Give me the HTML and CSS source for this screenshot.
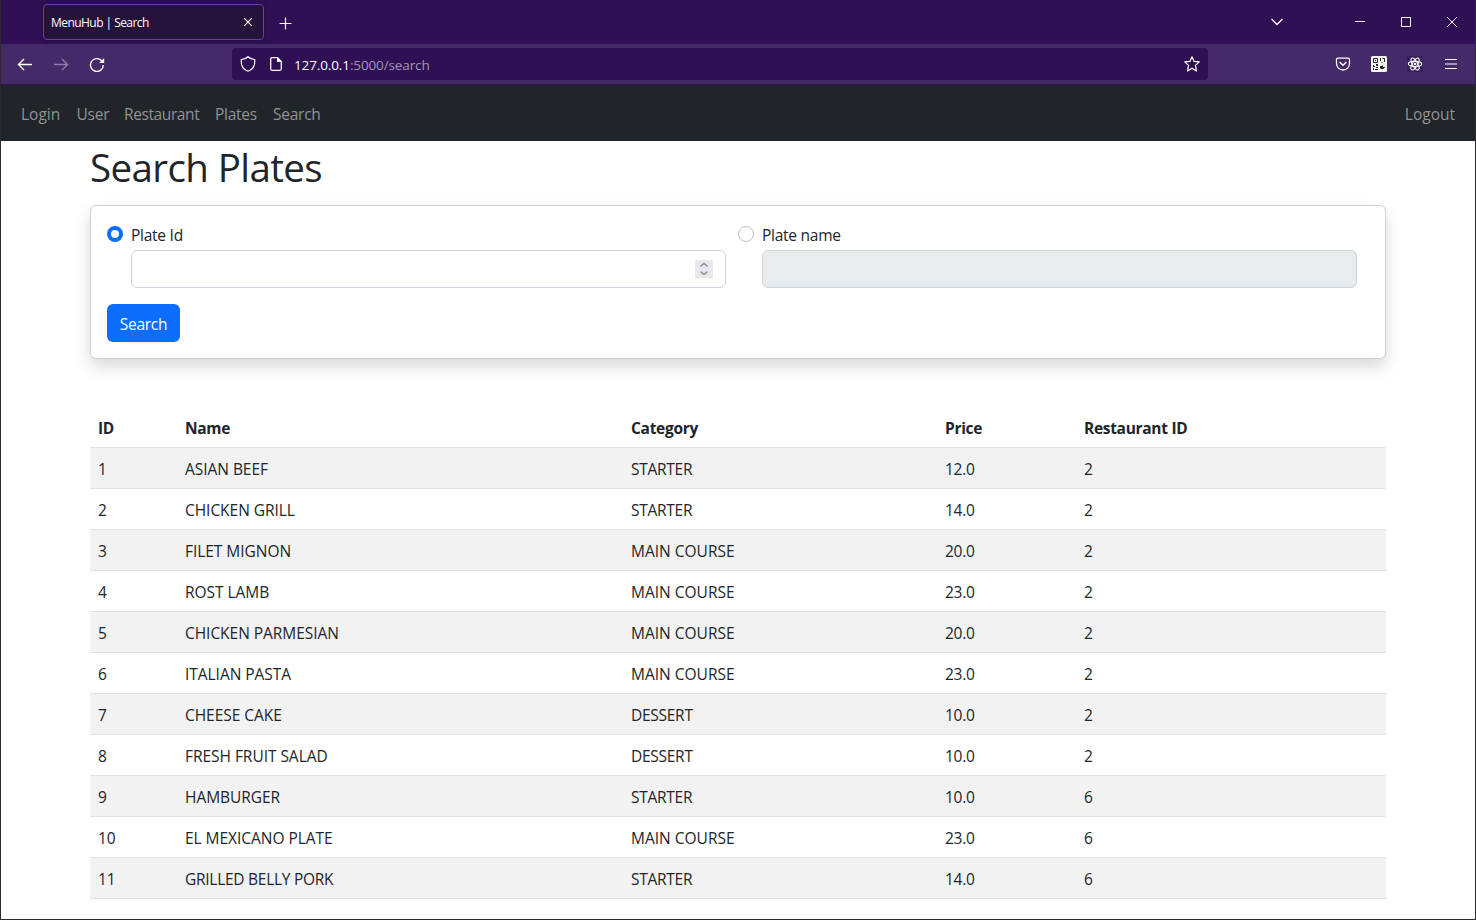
FILE: index.html
```html
<!DOCTYPE html>
<html lang="en">
<head>
<meta charset="utf-8">
<title>MenuHub | Search</title>
<link rel="stylesheet" href="styles.css">
</head>
<body>
<div class="window">
  <header class="tabbar">
    <div class="tab"><span class="tab-title">MenuHub | Search</span>
      <svg class="tab-close" width="10" height="10" viewBox="0 0 10 10"><path d="M1.200 1.200l7.600 7.600M8.800 1.200L1.200 8.800"/></svg>
    </div>
    <svg class="new-tab" width="13" height="13" viewBox="0 0 13 13"><path d="M6.500 .5v12M.5 6.500h12"/></svg>
    <div class="controls">
      <svg width="14" height="10" viewBox="0 0 14 10"><path d="M1.500 2L7 7.500 12.500 2" stroke-width="1.300"/></svg>
      <svg class="minimize" width="12" height="12" viewBox="0 0 12 12"><path d="M1 5.500h10"/></svg>
      <svg width="12" height="12" viewBox="0 0 12 12"><path d="M1.500 1.500h9v9h-9z"/></svg>
      <svg width="12" height="12" viewBox="0 0 12 12"><path d="M1 1l10 10M11 1L1 11"/></svg>
    </div>
  </header>
  <div class="toolbar">
    <div class="history">
      <svg width="16" height="16" viewBox="0 0 16 16"><path d="M15 8.500H2M7 3L1.500 8.500 7 14"/></svg>
      <svg class="disabled" width="16" height="16" viewBox="0 0 16 16"><path d="M1 8.500h13M9 3l5.500 5.500L9 14"/></svg>
      <svg width="16" height="16" viewBox="0 0 16 16"><path d="M14.300 9A6.400 6.400 0 1 1 12.600 4.700L14 5.800"/><path class="solid" d="M15.200 2v5H10.200z"/></svg>
    </div>
    <div class="address">
      <svg width="16" height="16" viewBox="0 0 16 16"><path d="M8 .8C6.200 2.500 4 3.300 1.300 3.500v2.700c0 4.200 2.200 7.400 6.700 9.100 4.500-1.700 6.700-4.900 6.700-9.100V3.500C12 3.300 9.800 2.500 8 .8z" stroke-width="1.200"/></svg>
      <svg class="page-icon" width="16" height="16" viewBox="0 0 16 16"><path d="M9.500 1.700H4.200q-1.500 0-1.500 1.500v9.600q0 1.500 1.500 1.500h7.600q1.500 0 1.500-1.500V5.500z" stroke-width="1.300"/><path class="solid" d="M9 1l5 5H9z"/></svg>
      <span class="url"><b>127.0.0.1</b>:5000/search</span>
      <svg class="star" width="18" height="18" viewBox="0 0 18 18"><path d="M9 1.800l2.100 4.600 5.200.5-3.900 3.500 1.100 5.500L9 13.200l-4.500 2.700 1.100-5.500-3.900-3.500 5.200-.5z" stroke-width="1.200" stroke-linejoin="round"/></svg>
    </div>
    <div class="extensions">
      <svg width="16" height="16" viewBox="0 0 16 16"><path d="M3 2.200h10q1.500 0 1.500 1.500v3.800a6.500 6.500 0 0 1-13 0V3.700q0-1.500 1.500-1.500z" stroke-width="1.300"/><path d="M4.600 6L8 9.300 11.400 6" stroke-width="1.500"/></svg>
      <svg width="16" height="16" viewBox="0 0 16 16"><rect class="qr-base" width="16" height="16" rx="1.500"/><path class="qr-line" d="M2.500 2.500h4v4h-4zM9.500 2v3M13.500 2.500V6M10.500 6.500h1M11.500 2.500h2"/><path class="qr-dot" d="M4 4h1v1H4zM2 9h1v1h1v1H2zM5 8h2v2H5zM2 12h1v2H2zM4 13h3v1H4zM5 11h2v1H5zM9 10h2l1-1v2h2a2.800 2.800 0 0 1-5 1z"/></svg>
      <svg width="16" height="16" viewBox="0 0 16 16"><rect class="react-base" width="16" height="16"/><g stroke-width="1.100"><ellipse cx="8" cy="8" rx="6.700" ry="2.600"/><ellipse cx="8" cy="8" rx="6.700" ry="2.600" transform="rotate(60 8 8)"/><ellipse cx="8" cy="8" rx="6.700" ry="2.600" transform="rotate(120 8 8)"/></g><circle class="solid" cx="8" cy="8" r="1.300"/></svg>
      <svg width="16" height="16" viewBox="0 0 16 16"><path d="M2 3.500h12M2 8h12M2 12.500h12"/></svg>
    </div>
  </div>
  <nav class="navbar">
    <a class="w-login">Login</a><a class="w-user">User</a><a class="w-restaurant">Restaurant</a><a class="w-plates">Plates</a><a class="w-search">Search</a>
    <a class="logout">Logout</a>
  </nav>
  <main class="container">
    <h1>Search Plates</h1>
    <form class="card">
      <div class="fields">
        <div class="field">
          <span class="radio checked"></span>
          <label>Plate Id</label>
          <div class="input"><span class="spinner"><svg width="18" height="18" viewBox="0 0 18 18"><path d="M5.500 6.500L9 3.500l3.500 3M5.500 11.500l3.500 3 3.500-3"/></svg></span></div>
        </div>
        <div class="field">
          <span class="radio"></span>
          <label>Plate name</label>
          <div class="input off"></div>
        </div>
      </div>
      <button type="button" class="btn">Search</button>
    </form>
    <table class="plates">
      <colgroup><col class="c-id"><col class="c-name"><col class="c-category"><col class="c-price"><col></colgroup>
      <thead><tr><th>ID</th><th>Name</th><th>Category</th><th>Price</th><th>Restaurant ID</th></tr></thead>
      <tbody>
        <tr><td>1</td><td>ASIAN BEEF</td><td class="tight">STARTER</td><td>12.0</td><td>2</td></tr>
        <tr><td>2</td><td>CHICKEN GRILL</td><td class="tight">STARTER</td><td>14.0</td><td>2</td></tr>
        <tr><td>3</td><td>FILET MIGNON</td><td>MAIN COURSE</td><td>20.0</td><td>2</td></tr>
        <tr><td>4</td><td>ROST LAMB</td><td>MAIN COURSE</td><td>23.0</td><td>2</td></tr>
        <tr><td>5</td><td>CHICKEN PARMESIAN</td><td>MAIN COURSE</td><td>20.0</td><td>2</td></tr>
        <tr><td>6</td><td>ITALIAN PASTA</td><td>MAIN COURSE</td><td>23.0</td><td>2</td></tr>
        <tr><td>7</td><td>CHEESE CAKE</td><td class="tight">DESSERT</td><td>10.0</td><td>2</td></tr>
        <tr><td>8</td><td>FRESH FRUIT SALAD</td><td class="tight">DESSERT</td><td>10.0</td><td>2</td></tr>
        <tr><td>9</td><td>HAMBURGER</td><td class="tight">STARTER</td><td>10.0</td><td>6</td></tr>
        <tr><td>10</td><td>EL MEXICANO PLATE</td><td>MAIN COURSE</td><td>23.0</td><td>6</td></tr>
        <tr><td>11</td><td class="tight">GRILLED BELLY PORK</td><td class="tight">STARTER</td><td>14.0</td><td>6</td></tr>
      </tbody>
    </table>
  </main>
</div>
</body>
</html>
```
FILE: styles.css
```css
* { box-sizing: border-box; }
body { margin: 0; font-family: "Open Sans", "Noto Sans", sans-serif; font-size: 15.5px; line-height: 24px; color: #212529; background: #fff; }
.window { height: 920px; border: 1px solid #2b2b2b; border-top: 0; overflow: hidden; }
svg { display: block; flex: none; fill: none; stroke: #fbfbfe; stroke-width: 1.2; }
.solid { fill: #fbfbfe; stroke: none; }

.tabbar { height: 44px; display: flex; align-items: center; padding-left: 42px; background: #2f1054; }
.tab { width: 221px; height: 36px; display: flex; align-items: center; justify-content: space-between; padding: 0 10px 0 7px; border: 1px solid #6a3fab; border-radius: 4px; background: #26133a; color: #fbfbfe; font-size: 12px; box-shadow: 0 0 4px rgba(0,0,0,.35); }
.tab-title { padding-top: 2px; letter-spacing: -.55px; white-space: nowrap; }
.new-tab { margin: 2px 0 0 15px; }
.controls { display: flex; align-items: center; gap: 34px; margin-left: auto; padding-right: 17px; }
.controls svg { stroke-width: 1; }
.minimize { margin-left: 36px; }

.toolbar { height: 41px; display: flex; align-items: center; background: #452a69; border-bottom: 1px solid #2f1054; }
.history { width: 231px; display: flex; gap: 20px; padding-left: 16px; }
.history svg { stroke-width: 1.4; }
.disabled { opacity: .4; }
.address { width: 976px; height: 32px; display: flex; align-items: center; padding: 0 7px 0 8px; border-radius: 4px; background: #2f1054; }
.page-icon { margin-left: 12px; }
.url { margin-left: 10px; padding-top: 2px; font-size: 13.5px; letter-spacing: -.12px; color: #a394b8; }
.url b { font-weight: 400; color: #fbfbfe; }
.star { margin-left: auto; }
.extensions { display: flex; gap: 20px; margin-left: auto; padding-right: 16px; }
.qr-base { fill: #f4f4f4; stroke: none; }
.qr-line { stroke: #222; stroke-width: 1; }
.qr-dot { fill: #222; stroke: none; }
.react-base { fill: #38215a; stroke: none; }

.navbar { height: 56px; display: flex; align-items: center; gap: 16px; padding: 2px 20px 0; background: #212529; color: #909294; }
.navbar a { white-space: nowrap; }
.w-login { width: 39.5px; }
.w-user { width: 31.5px; letter-spacing: -.25px; }
.w-restaurant { width: 75px; letter-spacing: -.4px; }
.w-plates { width: 42px; letter-spacing: -.25px; }
.w-search { letter-spacing: -.25px; }
.logout { margin-left: auto; }

.container { width: 1296px; margin: 0 auto; }
h1 { height: 48px; margin: 0 0 16px; padding-top: 2px; font-size: 38.5px; line-height: 48px; font-weight: 400; letter-spacing: -.6px; }
.card { height: 154px; padding: 16px; border: 1px solid #cfd0d1; border-radius: 6px; background: #fff; box-shadow: 0 8px 16px rgba(0,0,0,.15); }
.fields { display: flex; gap: 12px; }
.field { width: 619px; display: grid; grid-template-columns: 24px 1fr; }
.field label { line-height: 26px; height: 28px; letter-spacing: -.25px; }
.radio { width: 16px; height: 16px; margin-top: 4px; border: 1px solid #bfbfbf; border-radius: 50%; background: #fff; }
.radio.checked { border: 4px solid #0d6efd; }
.input { grid-column: 2; height: 38px; display: flex; align-items: center; justify-content: flex-end; padding-right: 12px; border: 1px solid #ced4da; border-radius: 6px; }
.input.off { background: #e9ecef; }
.spinner { background: #e9e9ed; }
.spinner svg { stroke: #8f8f9d; stroke-width: 1.5; }
.btn { display: block; width: 73px; height: 38px; margin-top: 16px; padding: 2px 0 0; border: 0; border-radius: 6px; background: #0d6efd; color: #fff; font: inherit; letter-spacing: -.25px; }

.plates { width: 100%; margin-top: 48px; border-collapse: separate; border-spacing: 0; table-layout: fixed; }
.c-id { width: 87px; }
.c-name { width: 446px; }
.c-category { width: 314px; }
.c-price { width: 139px; }
th, td { height: 41px; padding: 9px 8px 7px; border-bottom: 1px solid #dee2e6; text-align: left; white-space: nowrap; }
th { font-weight: 700; letter-spacing: -.3px; }
td:nth-child(2) { letter-spacing: -.04px; }
td:nth-child(4), td.tight { letter-spacing: -.27px; }
tbody tr:nth-child(odd) { background: #f2f2f2; }
```
